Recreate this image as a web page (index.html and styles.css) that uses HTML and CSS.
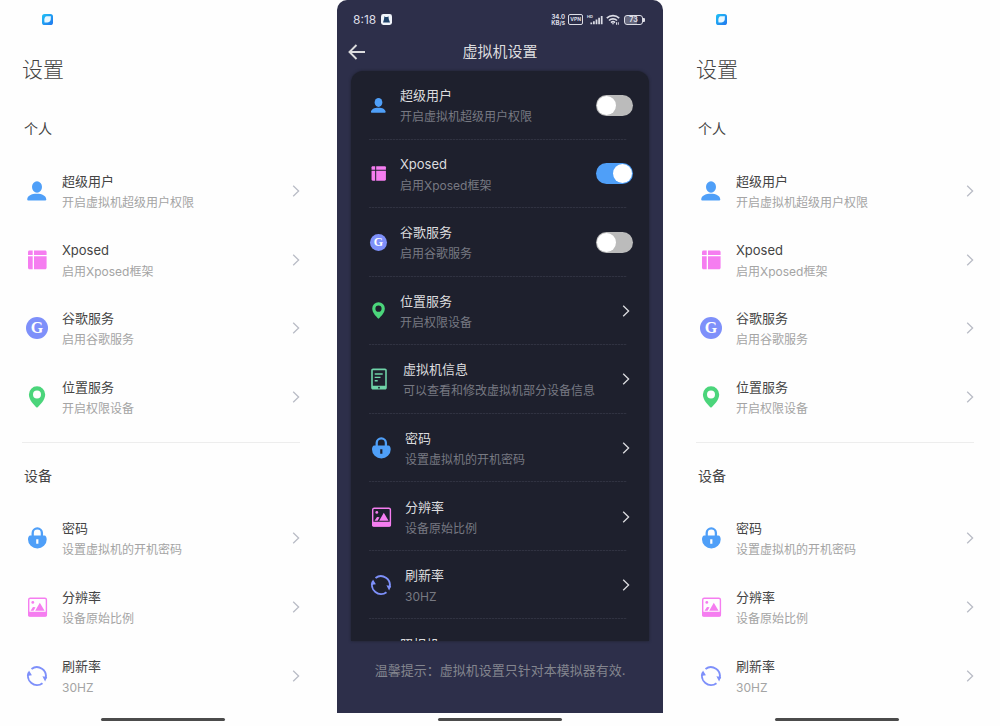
FILE: index.html
```html
<!DOCTYPE html>
<html lang="zh-CN">
<head>
<meta charset="utf-8">
<meta name="viewport" content="width=device-width, initial-scale=1">
<title>虚拟机设置</title>
<link rel="stylesheet" href="styles.css">
</head>
<body>
<svg class="sprite" aria-hidden="true">
  <defs>
    <linearGradient id="app-blue" x1="0" y1="0" x2="1" y2="1"><stop offset="0" stop-color="#1fc3f6"/><stop offset="1" stop-color="#2276ee"/></linearGradient>
  </defs>
  <symbol id="app" viewBox="0 0 11 11"><rect width="11" height="11" rx="2.6" fill="url(#app-blue)"/><path d="M4.600 2.300H8.900L8.700 5.800C8.200 7.600 7 8.500 5.300 8.600L2.500 8.500 2.300 5.700C2.500 3.800 3.300 2.500 4.600 2.300z" fill="#e9f8ff"/></symbol>
  <symbol id="user" viewBox="0 0 22 22"><ellipse cx="11" cy="7" rx="5" ry="5.8" fill="#4f9ff8"/><path d="M1.2 19.2C1.6 15.7 5.4 13.8 10.800 13.8s9.100 1.900 9.500 5.400c0 1-.6 1.300-1.500 1.300H2.600c-.9 0-1.400-.4-1.400-1.300z" fill="#4f9ff8"/></symbol>
  <symbol id="frame" viewBox="0 0 22 22"><g fill="#f57df0"><path d="M3.500 1.500H6.700V6H2V3c0-.9.6-1.500 1.500-1.500z"/><path d="M8 1.500H19c.9 0 1.600.6 1.600 1.500v3H8z"/><path d="M2 7.300H6.700V20.300H3.500C2.600 20.300 2 19.700 2 18.800z"/><path d="M8 7.300H20.600V18.800c0 .9-.7 1.500-1.600 1.500H8z"/></g></symbol>
  <symbol id="pin" viewBox="0 0 22 22"><path fill-rule="evenodd" fill="#4bd57b" d="M11 .3a8.100 8.100 0 0 0-8.100 8.100C2.900 14 8 18.900 11 21.700c3-2.800 8.200-7.700 8.200-13.300A8.100 8.100 0 0 0 11 .3zM11 4.600a4 4 0 1 1 0 8 4 4 0 0 1 0-8z"/></symbol>
  <symbol id="lock" viewBox="0 0 22 22"><path d="M6.700 10V6a4.600 4.600 0 0 1 9.200 0v4" fill="none" stroke="#4f9ff8" stroke-width="2.300"/><path fill-rule="evenodd" fill="#4f9ff8" d="M4.300 8.500h14c1.600 0 2.400 1.800 2.400 4a9.350 9 0 0 1-18.700 0c0-2.200.8-4 2.300-4zM10.200 12.300v4.500h2.200v-4.500z"/></symbol>
  <symbol id="picture" viewBox="0 0 22 22"><rect x="2.700" y="2.200" width="17.700" height="17.700" rx="1.500" fill="none" stroke="#f57df0" stroke-width="1.400"/><path d="M2 15.700H21V19c0 1-.7 1.700-1.700 1.700H3.700c-1 0-1.700-.7-1.700-1.700z" fill="#f57df0"/><path d="M9.200 14.700l4.600-8 4.800 8zM4.500 14.700l2.500-3.700 2.500.3-1.900 3.400z" fill="#f57df0"/><circle cx="6.800" cy="6.400" r="1.400" fill="#f57df0"/></symbol>
  <symbol id="refresh" viewBox="0 0 22 22"><path d="M5.500 3.900A9 9 0 0 1 19.500 13.600M16.500 18.200A9 9 0 0 1 2.900 7.200" fill="none" stroke="#7e90fa" stroke-width="1.900"/><path d="M16.400 11.300L21.200 12 19.100 16.600zM.8 10.900L3 5.500 5.900 10.200z" fill="#7e90fa"/></symbol>
  <symbol id="device" viewBox="0 0 20 22"><path fill="#6fd3a8" fill-rule="evenodd" d="M3 .5h12c1 0 1.800.8 1.800 1.800v17.400c0 1-.8 1.800-1.800 1.800H3c-1 0-1.800-.8-1.800-1.800V2.300C1.200 1.300 2 .5 3 .5zM2.800 2.200v15.600h12.400V2.200zM9 18.800a.9.900 0 1 0 0 1.800.9.900 0 0 0 0-1.800z"/><path d="M4.700 6h8M4.700 9.400h5.800M4.700 12.800h3" stroke="#6fd3a8" stroke-width="1.400"/></symbol>
  <symbol id="camera" viewBox="0 0 22 22"><path d="M2 6h5l2-3h4l2 3h5v13H2z" fill="#4f9ff8"/><circle cx="11" cy="12" r="4" fill="#1e202d"/></symbol>
  <symbol id="chevron" viewBox="0 0 8 12"><path d="M1.200 .8L6.600 6 1.200 11.200" fill="none" stroke="currentColor" stroke-width="1.300"/></symbol>
</svg>

<main class="gallery">
  <article class="phone">
    <div class="screen light">
      <div class="light-status"><svg class="app-icon" aria-hidden="true"><use href="#app"/></svg></div>
      <h1 class="page-title">设置</h1>
      <section class="group personal">
        <h2 class="group-title">个人</h2>
        <nav class="rows" aria-label="个人">
          <a class="row" href="#root"><svg class="icon"><use href="#user"/></svg><span class="text"><span class="name">超级用户</span><span class="note">开启虚拟机超级用户权限</span></span><svg class="chevron"><use href="#chevron"/></svg></a>
          <a class="row" href="#xposed"><svg class="icon"><use href="#frame"/></svg><span class="text"><span class="name">Xposed</span><span class="note">启用Xposed框架</span></span><svg class="chevron"><use href="#chevron"/></svg></a>
          <a class="row" href="#google-service"><span class="icon google">G</span><span class="text"><span class="name">谷歌服务</span><span class="note">启用谷歌服务</span></span><svg class="chevron"><use href="#chevron"/></svg></a>
          <a class="row" href="#location"><svg class="icon"><use href="#pin"/></svg><span class="text"><span class="name">位置服务</span><span class="note">开启权限设备</span></span><svg class="chevron"><use href="#chevron"/></svg></a>
        </nav>
      </section>
      <section class="group">
        <h2 class="group-title">设备</h2>
        <nav class="rows devices" aria-label="设备">
          <a class="row" href="#password"><svg class="icon"><use href="#lock"/></svg><span class="text"><span class="name">密码</span><span class="note">设置虚拟机的开机密码</span></span><svg class="chevron"><use href="#chevron"/></svg></a>
          <a class="row" href="#resolution"><svg class="icon"><use href="#picture"/></svg><span class="text"><span class="name">分辨率</span><span class="note">设备原始比例</span></span><svg class="chevron"><use href="#chevron"/></svg></a>
          <a class="row" href="#rate"><svg class="icon"><use href="#refresh"/></svg><span class="text"><span class="name">刷新率</span><span class="note">30HZ</span></span><svg class="chevron"><use href="#chevron"/></svg></a>
        </nav>
      </section>
    </div>
    <div class="home"></div>
  </article>

  <article class="phone">
    <div class="screen dark">
      <div class="status">
        <span class="clock">8:18</span>
        <svg class="app-icon" viewBox="0 0 11 11" aria-hidden="true"><rect width="11" height="11" rx="2.400" fill="#f1f5fb"/><path d="M3.400 2.200l1 .8h2l1-.8.4 3 1.200 3.200H2L3 5.200z" fill="#1f4268"/></svg>
        <span class="speed"><span>34.0</span><span>KB/s</span></span>
        <span class="vpn">VPN</span>
        <span class="signal"><span class="hd">HD</span><svg class="bars" viewBox="0 0 15 10"><path d="M1.500 10V8M4.500 10V6.500M7.500 10V4.500M10.500 10V2.500M13.500 10V.5" stroke="currentColor" stroke-width="2"/></svg></span>
        <svg class="wifi" viewBox="0 0 14 11"><path d="M.8 4.200a9 9 0 0 1 12.400 0M3 6.500a5.800 5.800 0 0 1 8 0M5 8.600a3 3 0 0 1 4 0" fill="none" stroke="currentColor" stroke-width="1.700"/><path d="M5.800 9.200h2.400L7 10.700zM10 8.300h1v2.400h-1zM11.800 8.300h1v2.400h-1z" fill="currentColor"/></svg>
        <span class="battery">73</span>
      </div>
      <header class="topbar">
        <button class="back" type="button" aria-label="返回"><svg viewBox="0 0 18 16"><path d="M17 8H1.500M8.500 1L1.500 8l7 7" fill="none" stroke="currentColor" stroke-width="1.900"/></svg></button>
        <h1 class="topbar-title">虚拟机设置</h1>
      </header>
      <section class="card">
        <div class="card-rows">
          <label class="row"><svg class="icon small"><use href="#user"/></svg><span class="text"><span class="name">超级用户</span><span class="note">开启虚拟机超级用户权限</span></span><input class="switch" type="checkbox" role="switch"></label>
          <label class="row"><svg class="icon small"><use href="#frame"/></svg><span class="text"><span class="name">Xposed</span><span class="note">启用Xposed框架</span></span><input class="switch" type="checkbox" role="switch" checked></label>
          <label class="row"><span class="icon small google">G</span><span class="text"><span class="name">谷歌服务</span><span class="note">启用谷歌服务</span></span><input class="switch" type="checkbox" role="switch"></label>
          <a class="row" href="#location"><svg class="icon small"><use href="#pin"/></svg><span class="text"><span class="name">位置服务</span><span class="note">开启权限设备</span></span><svg class="chevron"><use href="#chevron"/></svg></a>
          <a class="row" href="#info"><svg class="icon medium"><use href="#device"/></svg><span class="text"><span class="name">虚拟机信息</span><span class="note">可以查看和修改虚拟机部分设备信息</span></span><svg class="chevron"><use href="#chevron"/></svg></a>
          <a class="row" href="#password"><svg class="icon"><use href="#lock"/></svg><span class="text"><span class="name">密码</span><span class="note">设置虚拟机的开机密码</span></span><svg class="chevron"><use href="#chevron"/></svg></a>
          <a class="row" href="#resolution"><svg class="icon"><use href="#picture"/></svg><span class="text"><span class="name">分辨率</span><span class="note">设备原始比例</span></span><svg class="chevron"><use href="#chevron"/></svg></a>
          <a class="row" href="#rate"><svg class="icon"><use href="#refresh"/></svg><span class="text"><span class="name">刷新率</span><span class="note">30HZ</span></span><svg class="chevron"><use href="#chevron"/></svg></a>
          <a class="row" href="#camera-setting"><svg class="icon small"><use href="#camera"/></svg><span class="text"><span class="name">照相机</span><span class="note">&nbsp;</span></span></a>
        </div>
      </section>
      <p class="tip">温馨提示：虚拟机设置只针对本模拟器有效.</p>
    </div>
    <div class="home"></div>
  </article>

  <article class="phone">
    <div class="screen light">
      <div class="light-status"><svg class="app-icon" aria-hidden="true"><use href="#app"/></svg></div>
      <h1 class="page-title">设置</h1>
      <section class="group personal">
        <h2 class="group-title">个人</h2>
        <nav class="rows" aria-label="个人">
          <a class="row" href="#root"><svg class="icon"><use href="#user"/></svg><span class="text"><span class="name">超级用户</span><span class="note">开启虚拟机超级用户权限</span></span><svg class="chevron"><use href="#chevron"/></svg></a>
          <a class="row" href="#xposed"><svg class="icon"><use href="#frame"/></svg><span class="text"><span class="name">Xposed</span><span class="note">启用Xposed框架</span></span><svg class="chevron"><use href="#chevron"/></svg></a>
          <a class="row" href="#google-service"><span class="icon google">G</span><span class="text"><span class="name">谷歌服务</span><span class="note">启用谷歌服务</span></span><svg class="chevron"><use href="#chevron"/></svg></a>
          <a class="row" href="#location"><svg class="icon"><use href="#pin"/></svg><span class="text"><span class="name">位置服务</span><span class="note">开启权限设备</span></span><svg class="chevron"><use href="#chevron"/></svg></a>
        </nav>
      </section>
      <section class="group">
        <h2 class="group-title">设备</h2>
        <nav class="rows devices" aria-label="设备">
          <a class="row" href="#password"><svg class="icon"><use href="#lock"/></svg><span class="text"><span class="name">密码</span><span class="note">设置虚拟机的开机密码</span></span><svg class="chevron"><use href="#chevron"/></svg></a>
          <a class="row" href="#resolution"><svg class="icon"><use href="#picture"/></svg><span class="text"><span class="name">分辨率</span><span class="note">设备原始比例</span></span><svg class="chevron"><use href="#chevron"/></svg></a>
          <a class="row" href="#rate"><svg class="icon"><use href="#refresh"/></svg><span class="text"><span class="name">刷新率</span><span class="note">30HZ</span></span><svg class="chevron"><use href="#chevron"/></svg></a>
        </nav>
      </section>
    </div>
    <div class="home"></div>
  </article>
</main>
</body>
</html>
```

FILE: styles.css
```css
* {
  box-sizing: border-box;
}

body {
  margin: 0;
  background: #fefefe;
  font-family: Inter, "Noto Sans CJK SC", sans-serif;
  font-size: 13px;
}

h1, h2, p {
  margin: 0;
  font-weight: inherit;
}

.sprite {
  position: absolute;
  width: 0;
  height: 0;
}

.gallery {
  display: grid;
  grid-template-columns: repeat(3, 1fr);
  gap: 11px;
  height: 100vh;
}

.phone {
  display: flex;
  flex-direction: column;
  min-width: 0;
  min-height: 0;
}

.screen {
  flex: 1;
  min-height: 0;
  display: flex;
  flex-direction: column;
}

.home {
  display: grid;
  place-items: center;
  flex: none;
  height: 13px;
}

.home::before {
  content: "";
  width: 38%;
  height: 3px;
  border-radius: 2px;
  background: #4b4b4b;
}

.app-icon {
  display: block;
  flex: none;
  width: 11px;
  height: 11px;
}

/* Shared setting rows */

.row {
  display: flex;
  align-items: center;
  min-width: 0;
  color: inherit;
  text-decoration: none;
}

.icon {
  flex: none;
  width: 22px;
  height: 22px;
}

.icon.small {
  width: 17px;
  height: 17px;
}

.icon.medium {
  width: 20px;
}

.google {
  display: grid;
  place-items: center;
  border-radius: 50%;
  background: #7e90fa;
  color: #fff;
  font-family: "Liberation Serif", serif;
  font-size: 16px;
  font-weight: 700;
  line-height: 1;
}

.google.small {
  font-size: 12px;
}

.text {
  display: flex;
  flex-direction: column;
  flex: 1;
  min-width: 0;
  padding-top: 2px;
  white-space: nowrap;
}

.name,
.note {
  line-height: 21px;
}

.name {
  font-size: 13px;
}

.note {
  font-size: 12px;
}

.chevron {
  flex: none;
  width: 8px;
  height: 12px;
}

/* Light settings screen */

.light {
  padding: 0 26px 0 22px;
  color: #444;
}

.light-status {
  padding: 14px 0 0 20px;
}

.page-title {
  padding-top: 29px;
  font-size: 21px;
  font-weight: 300;
  line-height: 32px;
}

.personal {
  padding-bottom: 11px;
  border-bottom: 1px solid #ededed;
}

.group-title {
  padding: 22px 2px 17px;
  font-size: 14px;
  line-height: 22px;
}

.personal .group-title {
  padding-top: 32px;
}

.light .rows {
  display: grid;
  grid-template-rows: repeat(4, 1fr);
  height: 274px;
}

.light .devices {
  grid-template-rows: repeat(3, 1fr);
  height: 206px;
}

.light .row {
  gap: 14px;
  padding-left: 4px;
}

.light .note {
  color: #a4a4a4;
}

.light .chevron {
  color: #b9bcc6;
}

/* Dark settings screen */

.dark {
  border-radius: 10px 10px 0 0;
  background: #2d2f4a;
  color: #dcdcde;
}

.status {
  display: flex;
  align-items: center;
  flex: none;
  height: 39px;
  padding: 0 20px 0 16px;
  color: #dcdde6;
}

.clock {
  margin-right: 5px;
  font-size: 12px;
}

.speed {
  display: flex;
  flex-direction: column;
  margin-left: auto;
  font-size: 6px;
  font-weight: 700;
  line-height: 6px;
  text-align: center;
}

.vpn {
  margin-left: 3px;
  padding: 0 1px;
  border: 1px solid currentColor;
  border-radius: 2px;
  font-size: 5px;
  font-weight: 700;
  line-height: 9px;
}

.signal {
  display: flex;
  align-items: flex-start;
  margin-left: 4px;
}

.hd {
  width: 3px;
  font-size: 4px;
  font-weight: 700;
  line-height: 4px;
}

.bars {
  width: 13px;
  height: 10px;
}

.wifi {
  width: 14px;
  height: 11px;
  margin-left: 3px;
}

.battery {
  position: relative;
  width: 19px;
  margin-left: 4px;
  border: 1px solid currentColor;
  border-radius: 3px;
  background: linear-gradient(90deg, #65677c 73%, transparent 73%);
  font-size: 7px;
  font-weight: 700;
  line-height: 8px;
  text-align: center;
}

.battery::after {
  content: "";
  position: absolute;
  top: 2px;
  right: -3px;
  width: 2px;
  height: 4px;
  border-radius: 0 1px 1px 0;
  background: currentColor;
}

.topbar {
  display: grid;
  grid-template-columns: 40px 1fr 40px;
  align-items: center;
  flex: none;
  height: 32px;
  padding-bottom: 7px;
}

.back {
  justify-self: end;
  margin-right: 11px;
  padding: 0;
  border: 0;
  background: none;
  color: inherit;
}

.back svg {
  display: block;
  width: 18px;
  height: 16px;
}

.topbar-title {
  font-size: 15px;
  line-height: 24px;
  text-align: center;
}

.card {
  flex: 1;
  min-height: 0;
  margin: 0 14px;
  padding: 0 16px 0 18px;
  overflow: hidden;
  border-radius: 12px 12px 0 0;
  background: #1e202d;
  box-shadow: 0 0 3px #1e202d;
}

.card-rows {
  display: grid;
  grid-template-rows: repeat(9, 1fr);
  height: 617px;
}

.card .row {
  gap: 13px;
  padding-left: 1px;
  background: repeating-linear-gradient(90deg, #303241 0 2px, #232532 2px 3px) left bottom / calc(100% - 6px) 1px no-repeat;
}

.card .note {
  color: #777982;
}

.card .chevron {
  margin-right: 3px;
  color: #dcdce0;
}

.switch {
  appearance: none;
  display: flex;
  flex: none;
  width: 37px;
  height: 21px;
  margin: 0;
  padding: 1px;
  border-radius: 11px;
  background: #bbb;
}

.switch::before {
  content: "";
  width: 19px;
  height: 19px;
  border-radius: 50%;
  background: #fff;
}

.switch:checked {
  justify-content: flex-end;
  background: #4f9ff8;
}

.tip {
  flex: none;
  padding: 19px 0 33px;
  color: #83858e;
  line-height: 20px;
  text-align: center;
}
```
